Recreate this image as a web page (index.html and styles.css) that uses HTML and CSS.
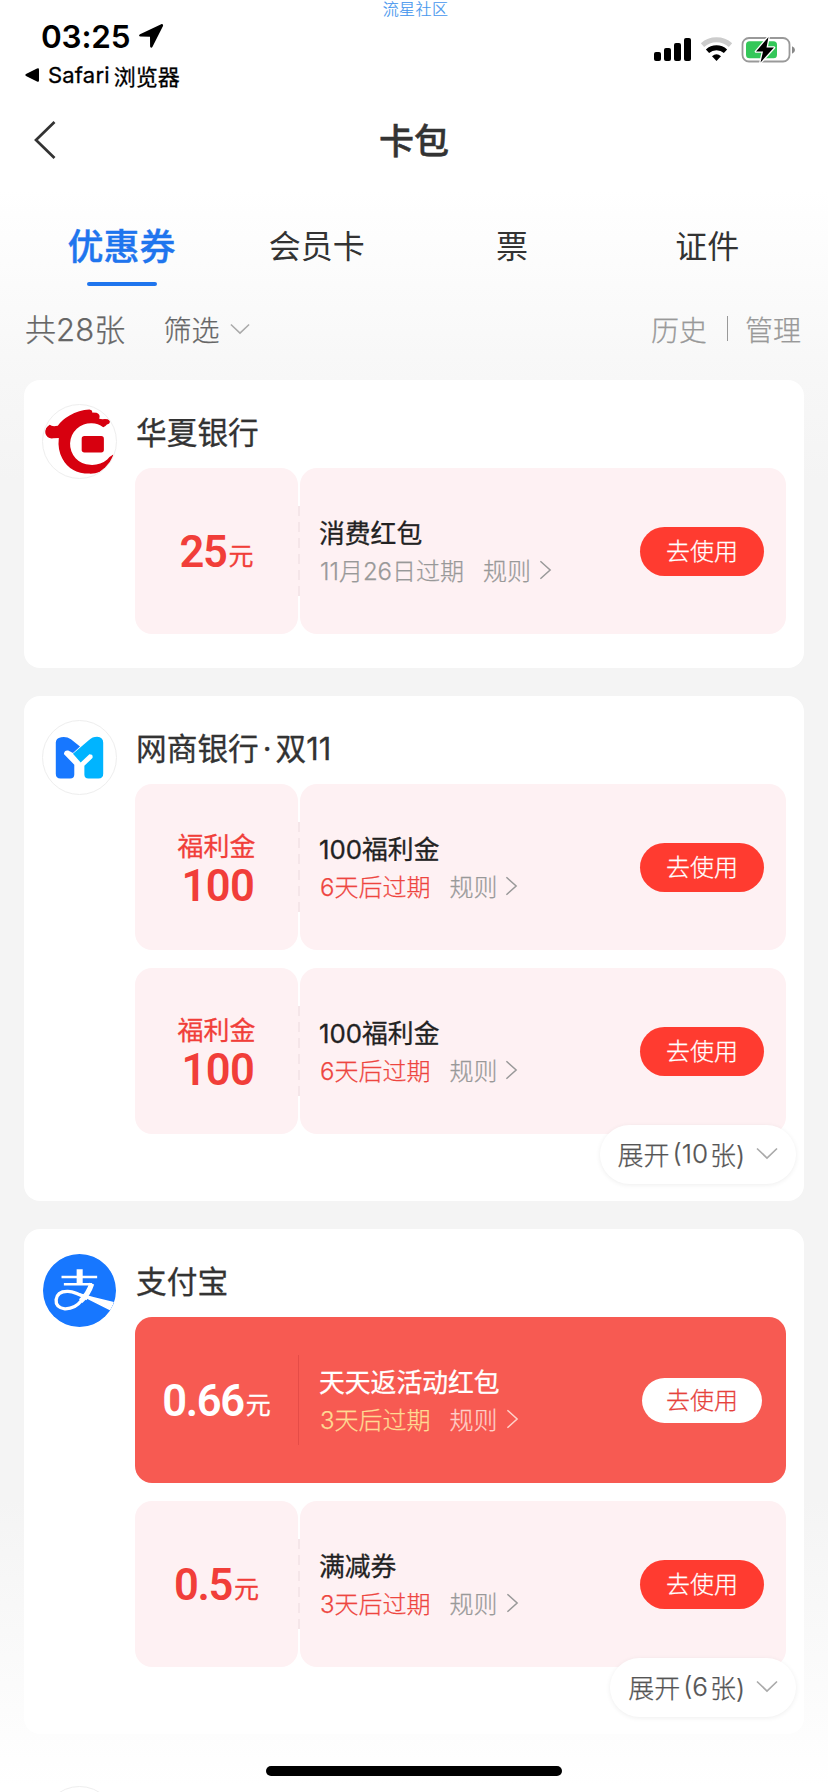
FILE: index.html
```html
<!DOCTYPE html>
<html lang="zh-CN">
<head>
<meta charset="utf-8">
<title>卡包</title>
<link rel="stylesheet" href="styles.css">
</head>
<body>
<svg class="defs" width="0" height="0">
  <symbol id="right" viewBox="0 0 14 22"><path d="M1.5 1.5 12 11 1.5 20.5" fill="none" stroke="currentColor" stroke-width="1.6"/></symbol>
  <symbol id="down" viewBox="0 0 22 13"><path d="M1 1.5 11 11 21 1.5" fill="none" stroke="currentColor" stroke-width="1.7"/></symbol>
</svg>
<div class="screen">
  <div class="watermark">流星社区</div>
  <header class="status">
    <div class="status-left">
      <div class="clock">03:25
        <svg class="loc" width="26" height="26" viewBox="0 0 26 26"><path d="M23.2 1.2 2 11.3c-1.500.7-1 2.300.4 2.300l9.600.1.100 9.600c0 1.600 1.700 1.900 2.400.5L25 2.900c.5-1.200-.6-2.200-1.800-1.700z"/></svg>
      </div>
      <div class="back-app"><svg width="15" height="14" viewBox="0 0 15 14"><path d="M1 6 12 .5q2-.8 2 1v11q0 1.800-2 1L1 8q-1.300-1 0-2z"/></svg><span class="app">Safari</span><span>浏览器</span></div>
    </div>
    <svg class="indicators" width="144" height="28" viewBox="0 0 144 28">
      <rect x="1" y="15" width="7" height="9" rx="2"/><rect x="11" y="11" width="7" height="13" rx="2"/><rect x="21" y="6" width="7" height="18" rx="2"/><rect x="31" y="1" width="7" height="23" rx="2"/>
      <path d="M49.500 8.200a21 21 0 0 1 28 0" fill="none" stroke="#ccc" stroke-width="5"/>
      <path d="M54.500 14.200a13.500 13.500 0 0 1 18 0" fill="none" stroke="#000" stroke-width="4.800"/>
      <path d="M59 19.200q4.500-3.700 9 0L63.500 24z"/>
      <rect x="89.500" y="1" width="47" height="23.500" rx="6.500" fill="none" stroke="#999" stroke-width="1.800"/>
      <rect x="93" y="4.300" width="31" height="17" rx="3.500" fill="#34c759"/>
      <path d="M139 9.200q3 1.300 3 3.800t-3 3.800z" fill="#888"/>
      <path d="M115.500 0 103 14.500h7L107.500 25.500 121 10.600h-7.500z" stroke="#fff" stroke-width="2.600" paint-order="stroke" stroke-linejoin="round"/>
    </svg>
  </header>
  <nav class="nav">
    <svg class="back" width="24" height="40" viewBox="0 0 24 40"><path d="M21.500 2 3 20 21.500 38" fill="none" stroke="#333" stroke-width="2.700"/></svg>
    <h1>卡包</h1>
  </nav>
  <div class="tabs"><div class="tab on">优惠券</div><div class="tab">会员卡</div><div class="tab">票</div><div class="tab">证件</div></div>
  <div class="filter">
    <span class="count">共28张</span><span class="pick">筛选</span><svg class="chev" width="20" height="12"><use href="#down"/></svg>
    <span class="link">历史</span><i></i><span class="link last">管理</span>
  </div>
  <main class="list">
    <section class="card">
      <div class="logo"><svg viewBox="127 103 223 223"><path fill="#d7000f" d="M150 165Q135 174 137 190Q141 207 160 205L177 204Q173 238 187 264Q210 309 268 310Q300 311 318 291Q337 271 339 253Q329 258 321 268Q300 286 270 284A62 62 0 0 1 275 160Q294 160 309 172Q317 169 320 164Q330 162 329 151Q320 146 307 148L297 147Q302 133 289 129L276 128Q278 121 268 119Q237 120 209 137Q184 151 174 168Q157 172 150 165Z"/><rect x="245" y="198" width="66" height="49" rx="8" fill="#d7000f"/></svg></div>
      <div class="body"><h2>华夏银行</h2>
        <div class="coupon"><div class="amount"><p><b>25</b><small>元</small></p></div><div class="detail"><div><h3>消费红包</h3><p class="sub"><span>11月26日过期</span><span class="rule">规则</span><svg width="13" height="22"><use href="#right"/></svg></p></div><button>去使用</button></div></div>
      </div>
    </section>
    <section class="card more">
      <div class="logo"><svg viewBox="127 90 223 223"><path fill="#1777ff" d="M184 141Q200 138 213 147L240 169 219 188 205 181Q194 179 192 191L223 223V252Q223 264 211 264H182Q168 264 168 250V157Q168 144 184 141Z"/><path fill="#00b4ff" d="M219 190 266 150Q277 140 291 140Q309 141 309 158V250Q309 264 295 264H265Q253 264 253 252V226L277 203Q280 192 268 192L242 216Z"/></svg></div>
      <div class="body"><h2>网商银行<span class="dot">·</span>双11</h2>
        <div class="coupon"><div class="amount"><strong>福利金</strong><b>100</b></div><div class="detail"><div><h3>100福利金</h3><p class="sub"><span class="soon">6天后过期</span><span class="rule">规则</span><svg width="13" height="22"><use href="#right"/></svg></p></div><button>去使用</button></div></div>
        <div class="coupon"><div class="amount"><strong>福利金</strong><b>100</b></div><div class="detail"><div><h3>100福利金</h3><p class="sub"><span class="soon">6天后过期</span><span class="rule">规则</span><svg width="13" height="22"><use href="#right"/></svg></p></div><button>去使用</button></div></div>
      </div>
      <div class="expand"><span>展开</span><span class="num">(10</span><span>张)</span><svg width="22" height="13"><use href="#down"/></svg></div>
    </section>
    <section class="card more">
      <div class="logo plain"><svg viewBox="127 130 223 223"><circle cx="238.500" cy="241.500" r="110" fill="#1777ff"/><g fill="none" stroke="#fff"><path stroke-width="18" d="M239 178V220"/><path stroke-width="7" d="M185 201.500H291M192 223H276"/><path stroke-width="15" d="M275 221Q265 252 242 273"/><path stroke-width="10" d="M246 270Q225 297 195 296Q167 292 169 269Q172 243 204 244Q226 245 262 266"/></g><path fill="#fff" d="M214 244Q250 252 280 261L341 276Q337 289 330 301L262 267Q238 253 214 244Z"/></svg></div>
      <div class="body"><h2>支付宝</h2>
        <div class="coupon hot"><div class="amount"><p><b>0.66</b><small>元</small></p></div><div class="detail"><div><h3>天天返活动红包</h3><p class="sub"><span class="soon">3天后过期</span><span class="rule">规则</span><svg width="13" height="22"><use href="#right"/></svg></p></div><button>去使用</button></div></div>
        <div class="coupon"><div class="amount"><p><b>0.5</b><small>元</small></p></div><div class="detail"><div><h3>满减券</h3><p class="sub"><span class="soon">3天后过期</span><span class="rule">规则</span><svg width="13" height="22"><use href="#right"/></svg></p></div><button>去使用</button></div></div>
      </div>
      <div class="expand"><span>展开</span><span class="num">(6</span><span>张)</span><svg width="22" height="13"><use href="#down"/></svg></div>
    </section>
    <section class="card peek"><div class="logo"></div></section>
  </main>
  <div class="home"></div>
</div>
</body>
</html>
```
FILE: styles.css
```css
* { box-sizing: border-box; margin: 0; padding: 0; }
body { font-family: Inter, "Noto Sans CJK SC", sans-serif; color: #333; background: #fff; }
.defs { position: absolute; }
svg { display: block; flex: none; }
.screen {
  position: relative; width: 828px; height: 1792px; overflow: hidden;
  background: linear-gradient(#fff 190px, #f7f7f7 380px, #f4f4f4 480px, #f4f4f4 1500px, #fcfcfc 1710px, #fff 1785px);
}
.watermark { position: absolute; top: 0; left: 0; width: 100%; padding-left: 3px; text-align: center; font-family: "Noto Sans CJK SC", sans-serif; font-size: 16px; line-height: 17px; letter-spacing: .4px; font-weight: 300; -webkit-text-stroke: .2px; color: #4596ee; }

.status { height: 104px; padding: 18px 31px 0 25px; display: flex; justify-content: space-between; color: #000; }
.clock { display: flex; align-items: center; gap: 8px; height: 36px; padding-left: 16px; font-size: 31.500px; font-weight: 600; letter-spacing: -.2px; }
.back-app { display: flex; align-items: center; height: 30px; margin-top: 6px; font-size: 22px; font-weight: 400; -webkit-text-stroke: .3px; }
.app { margin: 0 4px 0 8px; letter-spacing: .2px; }
.indicators { margin-top: 19px; }

.nav { position: relative; height: 76px; display: flex; align-items: center; justify-content: center; }
.nav h1 { font-size: 35px; font-weight: 500; line-height: 50px; -webkit-text-stroke: .5px #333; padding-bottom: 3px; }
.back { position: absolute; left: 33px; top: 16px; }

.tabs { display: flex; height: 106px; padding: 0 23px 0 24px; }
.tab { flex: 1; display: flex; flex-direction: column; align-items: center; padding-top: 41px; font-size: 32px; line-height: 52px; }
.tab.on { font-size: 36px; font-weight: 500; color: #1f75ee; -webkit-text-stroke: .4px #1f75ee; }
.tab.on::after { content: ""; width: 70px; height: 4px; margin-top: 9px; border-radius: 2px; background: #1f75ee; }

.filter { display: flex; align-items: center; height: 85px; padding: 0 27px 0 25px; font-weight: 300; color: #666; margin-bottom: 9px; -webkit-text-stroke: .25px; }
.count { padding-bottom: 2px; font-size: 31px; letter-spacing: .1px; }
.pick { margin-left: 38px; font-size: 28px; }
.chev { margin: 0 auto 0 11px; color: #aaa; }
.link { font-size: 28px; color: #999; }
.filter i { width: 1px; height: 25px; margin: 0 17px 0 20px; background: #999; }

.list { display: grid; gap: 28px; padding: 0 24px; }
.card { position: relative; display: flex; height: 288px; border-radius: 16px; background: #fff; }
.card.more { height: 505px; }
.logo { flex: none; width: 75px; height: 75px; margin: 24px 18px 0; border: 1px solid #eee; border-radius: 50%; overflow: hidden; }
.logo svg { width: 75px; height: 75px; margin: -1px; }
.logo.plain { border-color: transparent; }
.body { flex: 1; display: grid; gap: 18px; align-content: start; padding-right: 18px; }
.body h2 { height: 70px; padding: 32px 0 0 1px; font-size: 30.700px; line-height: 42px; font-weight: 400; -webkit-text-stroke: .3px #333; white-space: nowrap; }
.dot { margin: 0 4px; }

.coupon { display: grid; grid-template-columns: 163px 1fr; gap: 2px; height: 166px; }
.amount, .detail { border-radius: 17px; background: #fef1f3; }
.amount { display: flex; flex-direction: column; align-items: center; justify-content: center; color: #f13e39; }
.amount p { display: flex; align-items: baseline; padding-top: 7px; }
.amount b { font: 600 43.500px/40px Roboto, sans-serif; letter-spacing: -1.3px; }
.amount strong + b { margin-left: 3px; letter-spacing: -.6px; line-height: 42px; }
.amount small { margin-left: 2px; font-size: 25px; line-height: 36px; font-weight: 400; -webkit-text-stroke: .3px; position: relative; top: -2px; }
.amount strong { font-size: 26px; line-height: 39px; font-weight: 400; -webkit-text-stroke: .3px #f13e39; }
.detail { position: relative; display: flex; align-items: center; justify-content: space-between; padding: 0 22px 0 19px; }
.detail::before { content: ""; position: absolute; left: -2px; top: 38px; width: 2px; height: 90px; background: repeating-linear-gradient(#f5e6e9 0 10px, #fef1f3 10px 16px); }
h3 { padding-top: 1px; font-size: 25.800px; line-height: 36px; font-weight: 400; -webkit-text-stroke: .3px; color: #222; white-space: nowrap; }
.sub { display: flex; align-items: center; height: 36px; padding-left: 1px; font-size: 24px; font-weight: 300; -webkit-text-stroke: .25px; color: #999; white-space: nowrap; }
.rule { margin: 0 8px 0 19px; }
.soon { color: #ee4540; }
button { width: 124px; height: 49px; border: 0; border-radius: 25px; font: 300 24px/49px Inter, "Noto Sans CJK SC", sans-serif; -webkit-text-stroke: .25px; color: #fff; background: #ff3b30; }

.hot { gap: 0; grid-template-columns: 165px 1fr; border-radius: 17px; background: #f75a52; }
.hot .amount, .hot .detail { background: none; color: #fff; }
.hot .amount { padding-right: 2px; }
.hot .detail::before { width: 1px; background: #e54c47; }
.hot h3 { color: #fff; }
.hot .sub { color: #ffd0c8; }
.hot .soon { color: #ffda94; }
.hot button { width: 120px; height: 45px; margin-right: 2px; line-height: 45px; color: #e6423c; background: #fff; }

.expand { position: absolute; right: 8px; bottom: 17px; display: flex; align-items: center; height: 59px; padding: 0 18px 2px; border-radius: 30px; background: #fff; box-shadow: 0 1px 5px rgba(0, 0, 0, .07); font-size: 26px; font-weight: 300; -webkit-text-stroke: .25px; color: #555; }
.expand .num { margin: 0 2px 0 3px; }
.expand svg { margin-left: 11px; color: #aaa; }
.card.peek { background: none; }
.home { position: absolute; left: 266px; top: 1766px; width: 296px; height: 10px; border-radius: 5px; background: #000; }
```
